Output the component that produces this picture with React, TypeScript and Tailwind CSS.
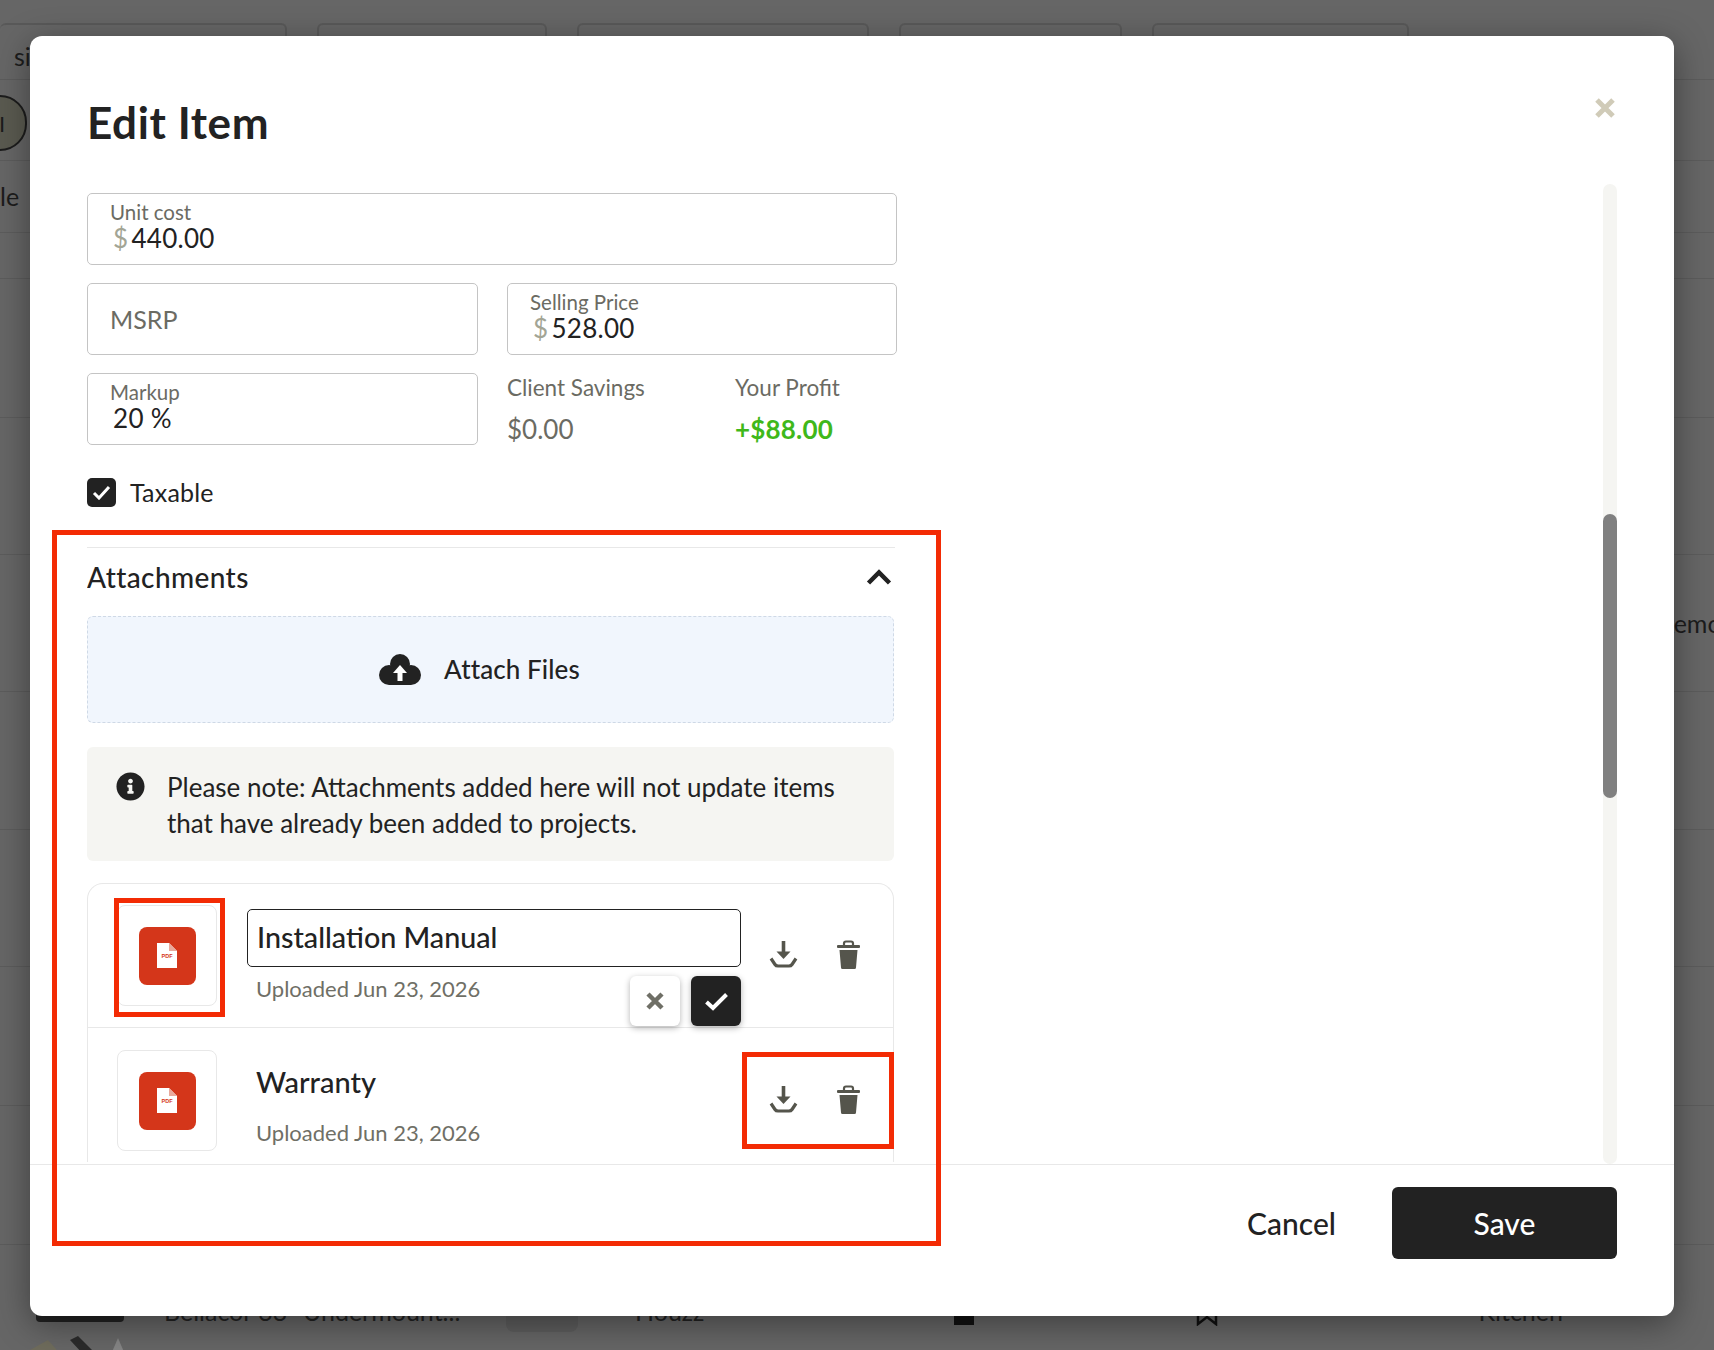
import { FaInfoCircle } from "react-icons/fa";

const rowHeights = ["h-[81px]", "h-[72px]", "h-[46px]", "h-[139px]", "h-[137px]", "h-[137px]", "h-[138px]", "h-[137px]", "h-[139px]", "h-[139px]"];

const chips = ["w-[287px]", "w-[230px]", "w-[292px]", "w-[223px]", "w-[257px]"];

const PdfThumb = () => (
  <div className="w-[100px] h-[101px] shrink-0 rounded-lg border border-[#e8e8e8] flex items-center justify-center">
    <div className="w-[57px] h-[58px] rounded-lg bg-[#d4361a] flex items-center justify-center">
      <svg width="20" height="25" viewBox="0 0 20 25">
        <path d="M0 0H12L20 8V25H0Z" fill="#fff" />
        <path d="M12 0L20 8H12Z" fill="#e9a99c" />
        <text x="10" y="15" textAnchor="middle" fontSize="5.5" fontWeight="700" fill="#d4361a" fontFamily="Liberation Sans, sans-serif">
          PDF
        </text>
      </svg>
    </div>
  </div>
);

const Actions = () => (
  <div className="flex items-center gap-[39px] ml-[28px]">
    <svg width="29" height="27" viewBox="0 0 29 27" fill="none">
      <path d="M14.5 0V13" stroke="#55554c" strokeWidth="3.6" />
      <path d="M7.5 10.5H21.5L14.5 18Z" fill="#55554c" />
      <path d="M2 17.5L6 23.5Q7 25 9 25H20Q22 25 23 23.5L27 17.5" stroke="#55554c" strokeWidth="3.2" />
    </svg>
    <svg width="23" height="29" viewBox="0 0 23 29">
      <path d="M7 5V3.5Q7 1.5 9 1.5H14Q16 1.5 16 3.5V5" fill="none" stroke="#55554c" strokeWidth="2.2" />
      <rect x="0" y="5" width="23" height="3" rx="1" fill="#55554c" />
      <path d="M2.5 10H20.5L19 27.5Q19 29 17.5 29H5.5Q4 29 4 27.5Z" fill="#55554c" />
    </svg>
  </div>
);

const Field = ({ label, value, prefix }: { label: string; value: string; prefix?: string }) => (
  <div className="h-[72px] rounded-[5px] border border-[#c4c4c4] pl-[22px] pt-[6px]">
    <div className="text-[20.5px] leading-[24px] text-[#6b6b63]">{label}</div>
    <div className="text-[26px] leading-[28px] tracking-[0.3px] text-[#222] ml-[3px]">
      {prefix && <span className="text-[#a3a595] mr-[3px]">{prefix}</span>}
      {value}
    </div>
  </div>
);

export default function App() {
  return (
    <div className="relative w-[1714px] h-[1350px] overflow-hidden bg-[#666666] font-['Lato',sans-serif]">
      {/* page behind the modal */}
      <div className="pt-[23px] text-[#1c1c1c]">
        <div className="flex gap-[30px] h-[56px]">
          {chips.map((w, i) => (
            <div key={i} className={`${w} h-[56px] rounded-t-md border-2 border-b-0 border-[#595959] ${i === 0 ? "pl-[14px] pt-[16px] text-[25px] leading-[30px] border-l-0" : ""}`}>
              {i === 0 ? "si" : null}
            </div>
          ))}
        </div>
        <div className="border-t border-[#5c5c5c]">
          {rowHeights.map((h, i) => (
            <div key={i} className={`${h} border-b border-[#5c5c5c] flex items-center justify-between`}>
              {i === 0 ? (
                <div className="w-[54px] h-[56px] -ml-[27px] mt-[6px] rounded-full border-2 border-[#1c1c1c] bg-[#5a5a50] pl-[24px] flex items-center text-[22px]">I</div>
              ) : null}
              {i === 1 ? <span className="text-[25px] leading-none">le</span> : null}
              {i === 5 ? <span className="ml-auto -mr-[33px] text-[25px] leading-none">Remove</span> : null}
            </div>
          ))}
        </div>
        <div className="flex items-center h-[40px] mt-[47px]">
          <div className="w-[88px] ml-[36px] h-[20px] bg-[#222] rounded" />
          <span className="ml-[40px] w-[340px] text-[25px] text-[#222] whitespace-nowrap">Bellacor 33" Undermount...</span>
          <div className="w-[72px] h-[40px] rounded-lg bg-[#5e5e5e] ml-[2px]" />
          <span className="ml-[57px] text-[25px] text-[#222]">Houzz</span>
          <div className="ml-[250px] w-[20px] h-[26px] bg-[#111]" />
          <svg className="ml-[222px]" width="22" height="28" viewBox="0 0 22 28" fill="none">
            <path d="M2 1V26L11 19L20 26V1" stroke="#111" strokeWidth="2.5" />
          </svg>
          <span className="ml-[260px] text-[25px] text-[#222]">Kitchen</span>
        </div>
        <svg className="ml-[28px] mt-[2px]" width="106" height="40" viewBox="0 0 106 40">
          <path d="M2 16L20 6L36 24L18 34Z" fill="#6f6c5c" />
          <path d="M42 6L50 2L76 28L68 34Z" fill="#2b2b2b" />
          <path d="M84 18L90 4L96 18L90 26Z" fill="#858585" />
        </svg>
      </div>

      {/* modal */}
      <div className="absolute left-[30px] top-[36px] w-[1644px] h-[1280px] rounded-xl bg-white flex flex-col shadow-[0_8px_34px_rgba(0,0,0,0.4)]">
        <div className="h-[148px] shrink-0 flex justify-between pl-[57px] pr-[59px]">
          <h1 className="text-[44px] leading-[52px] font-bold tracking-[0.6px] text-[#222] pt-[60px]">Edit Item</h1>
          <svg className="mt-[62px]" width="20" height="20" viewBox="0 0 20 20">
            <path d="M2 2L18 18M18 2L2 18" stroke="#d0cbb8" strokeWidth="5" />
          </svg>
        </div>

        <div className="flex-1 min-h-0 flex justify-between pl-[57px] pr-[57px]">
          <div className="w-[810px] pt-[9px] overflow-hidden">
            <Field label="Unit cost" value="440.00" prefix="$" />

            <div className="grid grid-cols-[391px_390px] gap-x-[29px] gap-y-[18px] mt-[18px]">
              <div className="h-[72px] rounded-[5px] border border-[#c4c4c4] pl-[22px] pt-[2px] flex items-center text-[25px] text-[#6b6b63]">MSRP</div>
              <Field label="Selling Price" value="528.00" prefix="$" />
              <Field label="Markup" value="20 %" />
              <div className="grid grid-cols-[228px_1fr] pt-[1px]">
                <div>
                  <div className="text-[22.5px] leading-[28px] text-[#6b6b63]">Client Savings</div>
                  <div className="text-[26px] leading-[32px] mt-[11px] text-[#6b6b63]">$0.00</div>
                </div>
                <div>
                  <div className="text-[22.5px] leading-[28px] text-[#6b6b63]">Your Profit</div>
                  <div className="text-[26px] leading-[32px] mt-[11px] font-bold tracking-[0.2px] text-[#3fb81a]">+$88.00</div>
                </div>
              </div>
            </div>

            <div className="flex items-center mt-[33px] h-[29px]">
              <div className="w-[29px] h-[29px] rounded-[5px] bg-[#222] flex items-center justify-center">
                <svg width="19" height="15" viewBox="0 0 19 15" fill="none">
                  <path d="M2 8L7 13L17 2" stroke="#fff" strokeWidth="3" />
                </svg>
              </div>
              <span className="ml-[14px] text-[25px] tracking-[0.2px] text-[#222]">Taxable</span>
            </div>

            <div className="mt-[40px] w-[808px] border-t border-[#e8e8e8] h-[69px] flex items-center justify-between pr-[3px] pb-[10px]">
              <span className="text-[28px] font-medium tracking-[0.4px] text-[#222]">Attachments</span>
              <svg width="26" height="16" viewBox="0 0 26 16" fill="none">
                <path d="M2.5 14L13 3.5L23.5 14" stroke="#222" strokeWidth="4.5" />
              </svg>
            </div>

            <div className="w-[807px] h-[107px] rounded-md border border-dashed border-[#cfd9e6] bg-[#f1f6fd] flex items-center justify-center gap-[23px] pr-[22px]">
              <svg width="42" height="31" viewBox="0 0 42 31">
                <circle cx="21" cy="10" r="10" fill="#222" />
                <circle cx="10" cy="21" r="10" fill="#222" />
                <circle cx="32" cy="21" r="10" fill="#222" />
                <rect x="10" y="12" width="22" height="19" fill="#222" />
                <path d="M21 11L28 19H23.5V27H18.5V19H14Z" fill="#fff" />
              </svg>
              <span className="text-[26px] font-medium tracking-[0.1px] text-[#222]">Attach Files</span>
            </div>

            <div className="w-[807px] h-[114px] mt-[24px] rounded-md bg-[#f5f5f2] flex pl-[29px] pt-[22px]">
              <FaInfoCircle className="text-[29px] text-[#222] shrink-0 mt-[3px]" />
              <p className="ml-[22px] w-[720px] text-[26px] leading-[36px] text-[#222]">
                Please note: Attachments added here will not update items that have already been added to projects.
              </p>
            </div>

            <div className="relative w-[807px] mt-[22px] rounded-t-2xl border border-b-0 border-[#e8e8e8]">
              <div className="h-[144px] border-b border-[#e8e8e8] flex pl-[29px] pt-[21px]">
                <PdfThumb />
                <div className="ml-[30px] w-[494px] pt-[4px]">
                  <div className="h-[58px] rounded-[5px] border border-[#222] pl-[9px] flex items-center text-[28.7px] font-medium text-[#222]">Installation Manual</div>
                  <div className="ml-[9px] mt-[8px] text-[22px] leading-[28px] text-[#6f6f66]">Uploaded Jun 23, 2026</div>
                </div>
                <div className="pt-[35px]">
                  <Actions />
                </div>
              </div>
              <div className="h-[134px] flex pl-[29px] pt-[22px]">
                <PdfThumb />
                <div className="ml-[30px] w-[494px] pl-[9px] pt-[14px]">
                  <div className="text-[29px] leading-[36px] font-medium text-[#222]">Warranty</div>
                  <div className="mt-[19px] text-[22px] leading-[28px] text-[#6f6f66]">Uploaded Jun 23, 2026</div>
                </div>
                <div className="pt-[35px]">
                  <Actions />
                </div>
              </div>

              {/* rename confirm buttons */}
              <div className="absolute left-[542px] top-[92px] flex gap-[11px]">
                <div className="w-[50px] h-[50px] rounded-md bg-white shadow-[0_2px_6px_rgba(0,0,0,0.3)] flex items-center justify-center">
                  <svg width="18" height="18" viewBox="0 0 18 18">
                    <path d="M2 2L16 16M16 2L2 16" stroke="#6f6f66" strokeWidth="4.5" />
                  </svg>
                </div>
                <div className="w-[50px] h-[50px] rounded-md bg-[#222] shadow-[0_2px_6px_rgba(0,0,0,0.3)] flex items-center justify-center">
                  <svg width="25" height="19" viewBox="0 0 25 19" fill="none">
                    <path d="M2.5 10L9 16L22.5 2.5" stroke="#fff" strokeWidth="4" />
                  </svg>
                </div>
              </div>
            </div>
          </div>

          <div className="w-[14px] rounded-full bg-[#f5f5f2] pt-[330px]">
            <div className="h-[284px] rounded-full bg-[#808080]" />
          </div>
        </div>

        <div className="h-[152px] shrink-0 border-t border-[#e8e8e8] flex justify-end items-start pt-[22px] pr-[57px]">
          <button className="h-[72px] mr-[56px] text-[30px] font-medium text-[#222]">Cancel</button>
          <button className="w-[225px] h-[72px] rounded-md bg-[#222] text-[30px] font-medium text-white">Save</button>
        </div>
      </div>

      {/* red annotation frames */}
      <div className="absolute left-[52px] top-[530px] w-[889px] h-[716px] border-[5px] border-[#f32b04]" />
      <div className="absolute left-[114px] top-[898px] w-[111px] h-[119px] border-[5px] border-[#f32b04]" />
      <div className="absolute left-[742px] top-[1052px] w-[152px] h-[97px] border-[5px] border-[#f32b04]" />
    </div>
  );
}
